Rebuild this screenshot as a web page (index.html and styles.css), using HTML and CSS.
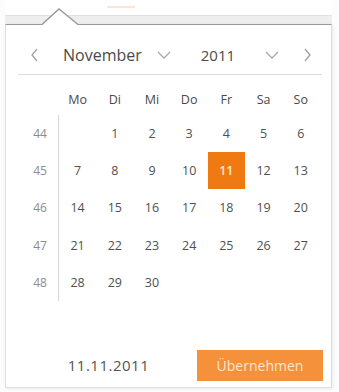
FILE: index.html
```html
<!DOCTYPE html>
<html lang="de">
<head>
<meta charset="utf-8">
<title>Datumsauswahl</title>
<link rel="stylesheet" href="styles.css">
</head>
<body>
<div class="top">
  <div class="field"><span class="accent"></span></div>
  <div class="band"></div>
</div>
<div class="popup">
  <svg class="caret" width="40" height="18" viewBox="0 0 40 18">
    <polygon points="0,17 17,1 36,17" fill="#ffffff"/>
    <polyline points="0,16.5 17,1 36,16.5" fill="none" stroke="#9a9a9a" stroke-width="1.4"/>
  </svg>
  <div class="nav">
    <span class="icon prev"><svg width="9" height="14" viewBox="0 0 9 14"><polyline points="7,1 2,7 7,13" fill="none" stroke="#a0a0a0" stroke-width="1.3"/></svg></span>
    <span class="month">November</span>
    <span class="icon down d1"><svg width="14" height="8" viewBox="0 0 14 8"><polyline points="1,1 7,7 13,1" fill="none" stroke="#a8a8a8" stroke-width="1.3"/></svg></span>
    <span class="year">2011</span>
    <span class="icon down d2"><svg width="14" height="8" viewBox="0 0 14 8"><polyline points="1,1 7,7 13,1" fill="none" stroke="#a8a8a8" stroke-width="1.3"/></svg></span>
    <span class="icon next"><svg width="9" height="14" viewBox="0 0 9 14"><polyline points="2,1 7,7 2,13" fill="none" stroke="#a0a0a0" stroke-width="1.3"/></svg></span>
  </div>
  <div class="weekdays">
    <span></span><span>Mo</span><span>Di</span><span>Mi</span><span>Do</span><span>Fr</span><span>Sa</span><span>So</span>
  </div>
  <div class="days">
    <span class="wk">44</span><span></span><span>1</span><span>2</span><span>3</span><span>4</span><span>5</span><span>6</span>
    <span class="wk">45</span><span>7</span><span>8</span><span>9</span><span>10</span><span class="sel">11</span><span>12</span><span>13</span>
    <span class="wk">46</span><span>14</span><span>15</span><span>16</span><span>17</span><span>18</span><span>19</span><span>20</span>
    <span class="wk">47</span><span>21</span><span>22</span><span>23</span><span>24</span><span>25</span><span>26</span><span>27</span>
    <span class="wk">48</span><span>28</span><span>29</span><span>30</span><span></span><span></span><span></span><span></span>
  </div>
  <div class="footer">
    <span class="date">11.11.2011</span>
    <button class="apply">Übernehmen</button>
  </div>
</div>
</body>
</html>
```
FILE: styles.css
```css
html, body {
  margin: 0;
  padding: 0;
  background: #fcfcfc;
}
body {
  width: 339px;
  height: 392px;
  overflow: hidden;
  font-family: "Open Sans", "Noto Sans", sans-serif;
  color: #555;
}
.top {
  height: 24px;
  display: flex;
  flex-direction: column;
  margin: 0 7px 0 5px;
}
.field {
  height: 15px;
  background: #ffffff;
  display: flex;
  align-items: flex-start;
  padding-left: 102px;
  padding-top: 6px;
  box-sizing: border-box;
}
.accent {
  width: 28px;
  height: 2px;
  background: #fbe6cf;
}
.band {
  flex: 1;
  background: #eeeeee;
  border-top: 1px solid #e2e2e2;
}
.popup {
  position: relative;
  margin-left: 5px;
  width: 327px;
  height: 364px;
  box-sizing: border-box;
  background: #ffffff;
  border: 1px solid #dedede;
  border-top: 1px solid #9a9a9a;
  box-shadow: 1px 1px 3px rgba(0,0,0,0.08);
}
.caret {
  position: absolute;
  left: 36px;
  top: -17px;
}
.nav {
  margin-top: 10px;
  height: 40px;
  box-sizing: border-box;
  margin-left: 12px;
  margin-right: 9px;
  border-bottom: 1px solid #dcdcdc;
  display: flex;
  align-items: center;
  color: #4a4a4a;
}
.icon {
  display: flex;
  align-items: center;
}
.prev { margin-left: 12px; }
.month { margin-left: 24px; font-size: 16px; }
.d1 { margin-left: 15px; }
.year { margin-left: 30px; font-size: 15px; }
.d2 { margin-left: 30px; }
.next { margin-left: 24px; }
.weekdays, .days {
  display: grid;
  grid-template-columns: 53px repeat(7, 37.2px);
  text-align: center;
}
.weekdays {
  margin-top: 8px;
  height: 32px;
  align-items: center;
  color: #4a4a4a;
  font-size: 12.5px;
}
.days {
  grid-auto-rows: 37.2px;
  font-size: 12.5px;
}
.days span {
  display: flex;
  align-items: center;
  justify-content: center;
  color: #505050;
}
.days .wk {
  border-right: 1px solid #d4d4d4;
  padding-left: 16px;
  color: #8c8c8c;
  font-size: 12px;
}
.days .sel {
  background: #f07a12;
  color: #fde9d2;
  font-weight: 600;
}
.footer {
  display: flex;
  align-items: center;
  margin-top: 49px;
}
.date {
  flex: 1;
  text-align: center;
  padding-left: 14px;
  font-size: 15px;
  letter-spacing: 0.5px;
  color: #555;
}
.apply {
  width: 126px;
  height: 31px;
  margin-right: 8px;
  border: none;
  background: #f5913b;
  color: #fde6cc;
  font-family: "Open Sans", "Noto Sans", sans-serif;
  font-size: 14px;
  padding: 0;
}
```
